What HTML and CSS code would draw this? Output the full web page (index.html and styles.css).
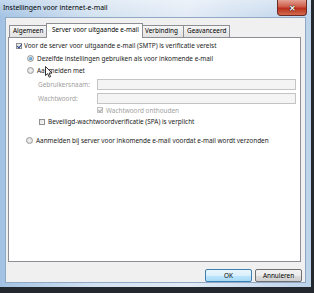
FILE: index.html
```html
<!DOCTYPE html>
<html>
<head>
    <title>Instellingen voor internet-e-mail</title>
    <link rel="stylesheet" href="styles.css">
</head>
<body>
    <div class="window">
        <div class="titlebar">
            <span class="title">Instellingen voor internet-e-mail</span>
            <span class="close">&#x2715;</span>
        </div>
        <div class="client">
            <div class="tabs">
                <span class="tab tab-algemeen">Algemeen</span>
                <span class="tab tab-active">Server voor uitgaande e-mail</span>
                <span class="tab tab-verbinding">Verbinding</span>
                <span class="tab tab-geavanceerd">Geavanceerd</span>
            </div>
            <div class="panel">
                <div class="row row-first">
                    <span class="check checked"></span>
                    <span>Voor de server voor uitgaande e-mail (SMTP) is verificatie vereist</span>
                </div>
                <div class="row row-radio row-tall">
                    <span class="radio selected"></span>
                    <span>Dezelfde instellingen gebruiken als voor inkomende e-mail</span>
                </div>
                <div class="row row-radio">
                    <span class="radio"></span>
                    <span>Aanmelden met</span>
                </div>
                <div class="fields">
                    <label class="field-label">Gebruikersnaam:</label>
                    <span class="field-input"></span>
                    <label class="field-label">Wachtwoord:</label>
                    <span class="field-input"></span>
                </div>
                <div class="row row-remember disabled">
                    <span class="check checked"></span>
                    <span>Wachtwoord onthouden</span>
                </div>
                <div class="row row-spa">
                    <span class="check"></span>
                    <span>Beveiligd-wachtwoordverificatie (SPA) is verplicht</span>
                </div>
                <div class="row row-radio row-last">
                    <span class="radio"></span>
                    <span>Aanmelden bij server voor inkomende e-mail voordat e-mail wordt verzonden</span>
                </div>
            </div>
            <div class="buttons">
                <button type="button" class="btn btn-default">OK</button>
                <button type="button" class="btn">Annuleren</button>
            </div>
        </div>
        <!-- muiscursor boven "Aanmelden met" -->
        <svg class="cursor" width="8" height="12" viewBox="0 0 8 12">
            <path d="M0.5 0.5 L0.5 9.5 L2.6 7.6 L4.2 11.2 L5.6 10.6 L4.1 7.1 L7 7.1 Z" fill="#fff" stroke="#000" stroke-width="0.8"/>
        </svg>
    </div>
</body>
</html>
```

FILE: styles.css
```css
body {
    margin: 0;
    background: #23282e;
    font-family: "Noto Sans", "Open Sans", sans-serif;
    font-size: 6.4px;
    color: #1a1a1a;
    width: 314px;
    height: 293px;
    overflow: hidden;
}

.window {
    position: relative;
    width: 311px;
    height: 287px;
    background: linear-gradient(to right, #a3c2e3 0%, #d3e2f1 30%, #e2ebf6 60%, #bdd3ea 100%);
    display: flex;
    flex-direction: column;
}

.titlebar {
    height: 17px;
    display: flex;
    align-items: flex-start;
    background: linear-gradient(to bottom, rgba(255, 255, 255, 0.35), rgba(255, 255, 255, 0));
}

.title {
    margin: 3px 0 0 3px;
    font-size: 6.9px;
    color: #000;
}

.close {
    margin-left: auto;
    margin-right: 4px;
    width: 30px;
    height: 16px;
    border: 1px solid #6b2a24;
    border-top: none;
    border-radius: 0 0 4px 4px;
    background: linear-gradient(to bottom, #e3a294 0%, #cf5b47 45%, #b9301c 55%, #d26a4e 100%);
    color: #fff;
    font-size: 8px;
    font-weight: bold;
    text-align: center;
    line-height: 15px;
    text-shadow: 0 0 1px #000, 0 0 1px #000;
    box-sizing: border-box;
}

.client {
    margin: 0 5px 0 5px;
    height: 266px;
    background: #f0f0f0;
    border: 1px solid #8ea8c6;
    box-sizing: border-box;
    display: flex;
    flex-direction: column;
}

.tabs {
    height: 19px;
    padding-left: 3px;
    display: flex;
    align-items: flex-end;
}

.tab {
    height: 12px;
    box-sizing: border-box;
    border: 1px solid #8c8e94;
    border-bottom: none;
    border-right: none;
    background: linear-gradient(to bottom, #f6f6f6, #e2e2e2);
    padding-left: 3px;
    line-height: 10px;
    white-space: nowrap;
    color: #000;
}

.tab-algemeen {
    width: 37px;
}

.tab-active {
    width: 97px;
    height: 15px;
    margin-bottom: -1px;
    background: #fff;
    border-right: 1px solid #8c8e94;
    padding-left: 5px;
    line-height: 12px;
    position: relative;
}

.tab-verbinding {
    width: 40px;
    border-left: none;
    padding-left: 2px;
}

.tab-geavanceerd {
    width: 47px;
    border-right: 1px solid #8c8e94;
}

.panel {
    margin-left: 2px;
    width: 293px;
    height: 226px;
    box-sizing: border-box;
    background: #fff;
    border: 1px solid #8c8e94;
    padding: 2px 0 0 7px;
}

.row {
    display: flex;
    align-items: center;
    gap: 3px;
    height: 12px;
    white-space: nowrap;
}

.row-first {
    gap: 2px;
}

.row-radio {
    margin-left: 11px;
}

.row-tall {
    height: 13px;
}

.check {
    width: 6px;
    height: 6px;
    border: 1px solid #8f8f8f;
    background: linear-gradient(135deg, #e2e2e2, #fbfbfb);
    box-sizing: border-box;
    position: relative;
}

.check.checked::after {
    content: "";
    position: absolute;
    left: 1px;
    top: -1px;
    width: 2px;
    height: 4px;
    border: solid #2a4a8a;
    border-width: 0 1px 1px 0;
    transform: rotate(40deg);
}

.radio {
    width: 7px;
    height: 7px;
    border-radius: 50%;
    border: 1px solid #9a9a9a;
    background: radial-gradient(circle, #f4f4f4, #d6d6d6);
    box-sizing: border-box;
    position: relative;
}

.radio.selected::after {
    content: "";
    position: absolute;
    left: 1px;
    top: 1px;
    width: 3px;
    height: 3px;
    border-radius: 50%;
    background: radial-gradient(circle at 40% 40%, #7fd0f5, #1a5fa8);
}

.fields {
    margin: 2px 0 0 22px;
    display: grid;
    grid-template-columns: 59px 199px;
    row-gap: 3px;
    align-items: center;
}

.field-label {
    color: #a0a0a0;
}

.field-input {
    height: 11px;
    border: 1px solid #c4c4c4;
    background: #f4f4f4;
    box-sizing: border-box;
}

.row-remember {
    margin: 1px 0 0 81px;
    height: 11px;
}

.disabled {
    color: #a0a0a0;
}

.disabled .check {
    border-color: #c2c2c2;
    background: #f4f4f4;
}

.disabled .check.checked::after {
    border-color: #a8a8a8;
}

.row-spa {
    margin-left: 23px;
}

.row-last {
    margin-top: 7px;
    margin-left: 10px;
}

.buttons {
    display: flex;
    justify-content: flex-end;
    gap: 3px;
    padding: 7px 3px 0 0;
}

.btn {
    width: 47px;
    height: 13px;
    padding: 0;
    font-family: inherit;
    font-size: 6.4px;
    color: #000;
    border: 1px solid #707070;
    border-radius: 2px;
    background: linear-gradient(to bottom, #f2f2f2 0%, #ebebeb 50%, #dddddd 51%, #cfcfcf 100%);
}

.btn-default {
    border-color: #3c7fb1;
    background: linear-gradient(to bottom, #eaf6fd 0%, #d9f0fc 50%, #bee6fd 51%, #a7d9f5 100%);
}

.cursor {
    position: absolute;
    left: 45px;
    top: 66px;
}
```
